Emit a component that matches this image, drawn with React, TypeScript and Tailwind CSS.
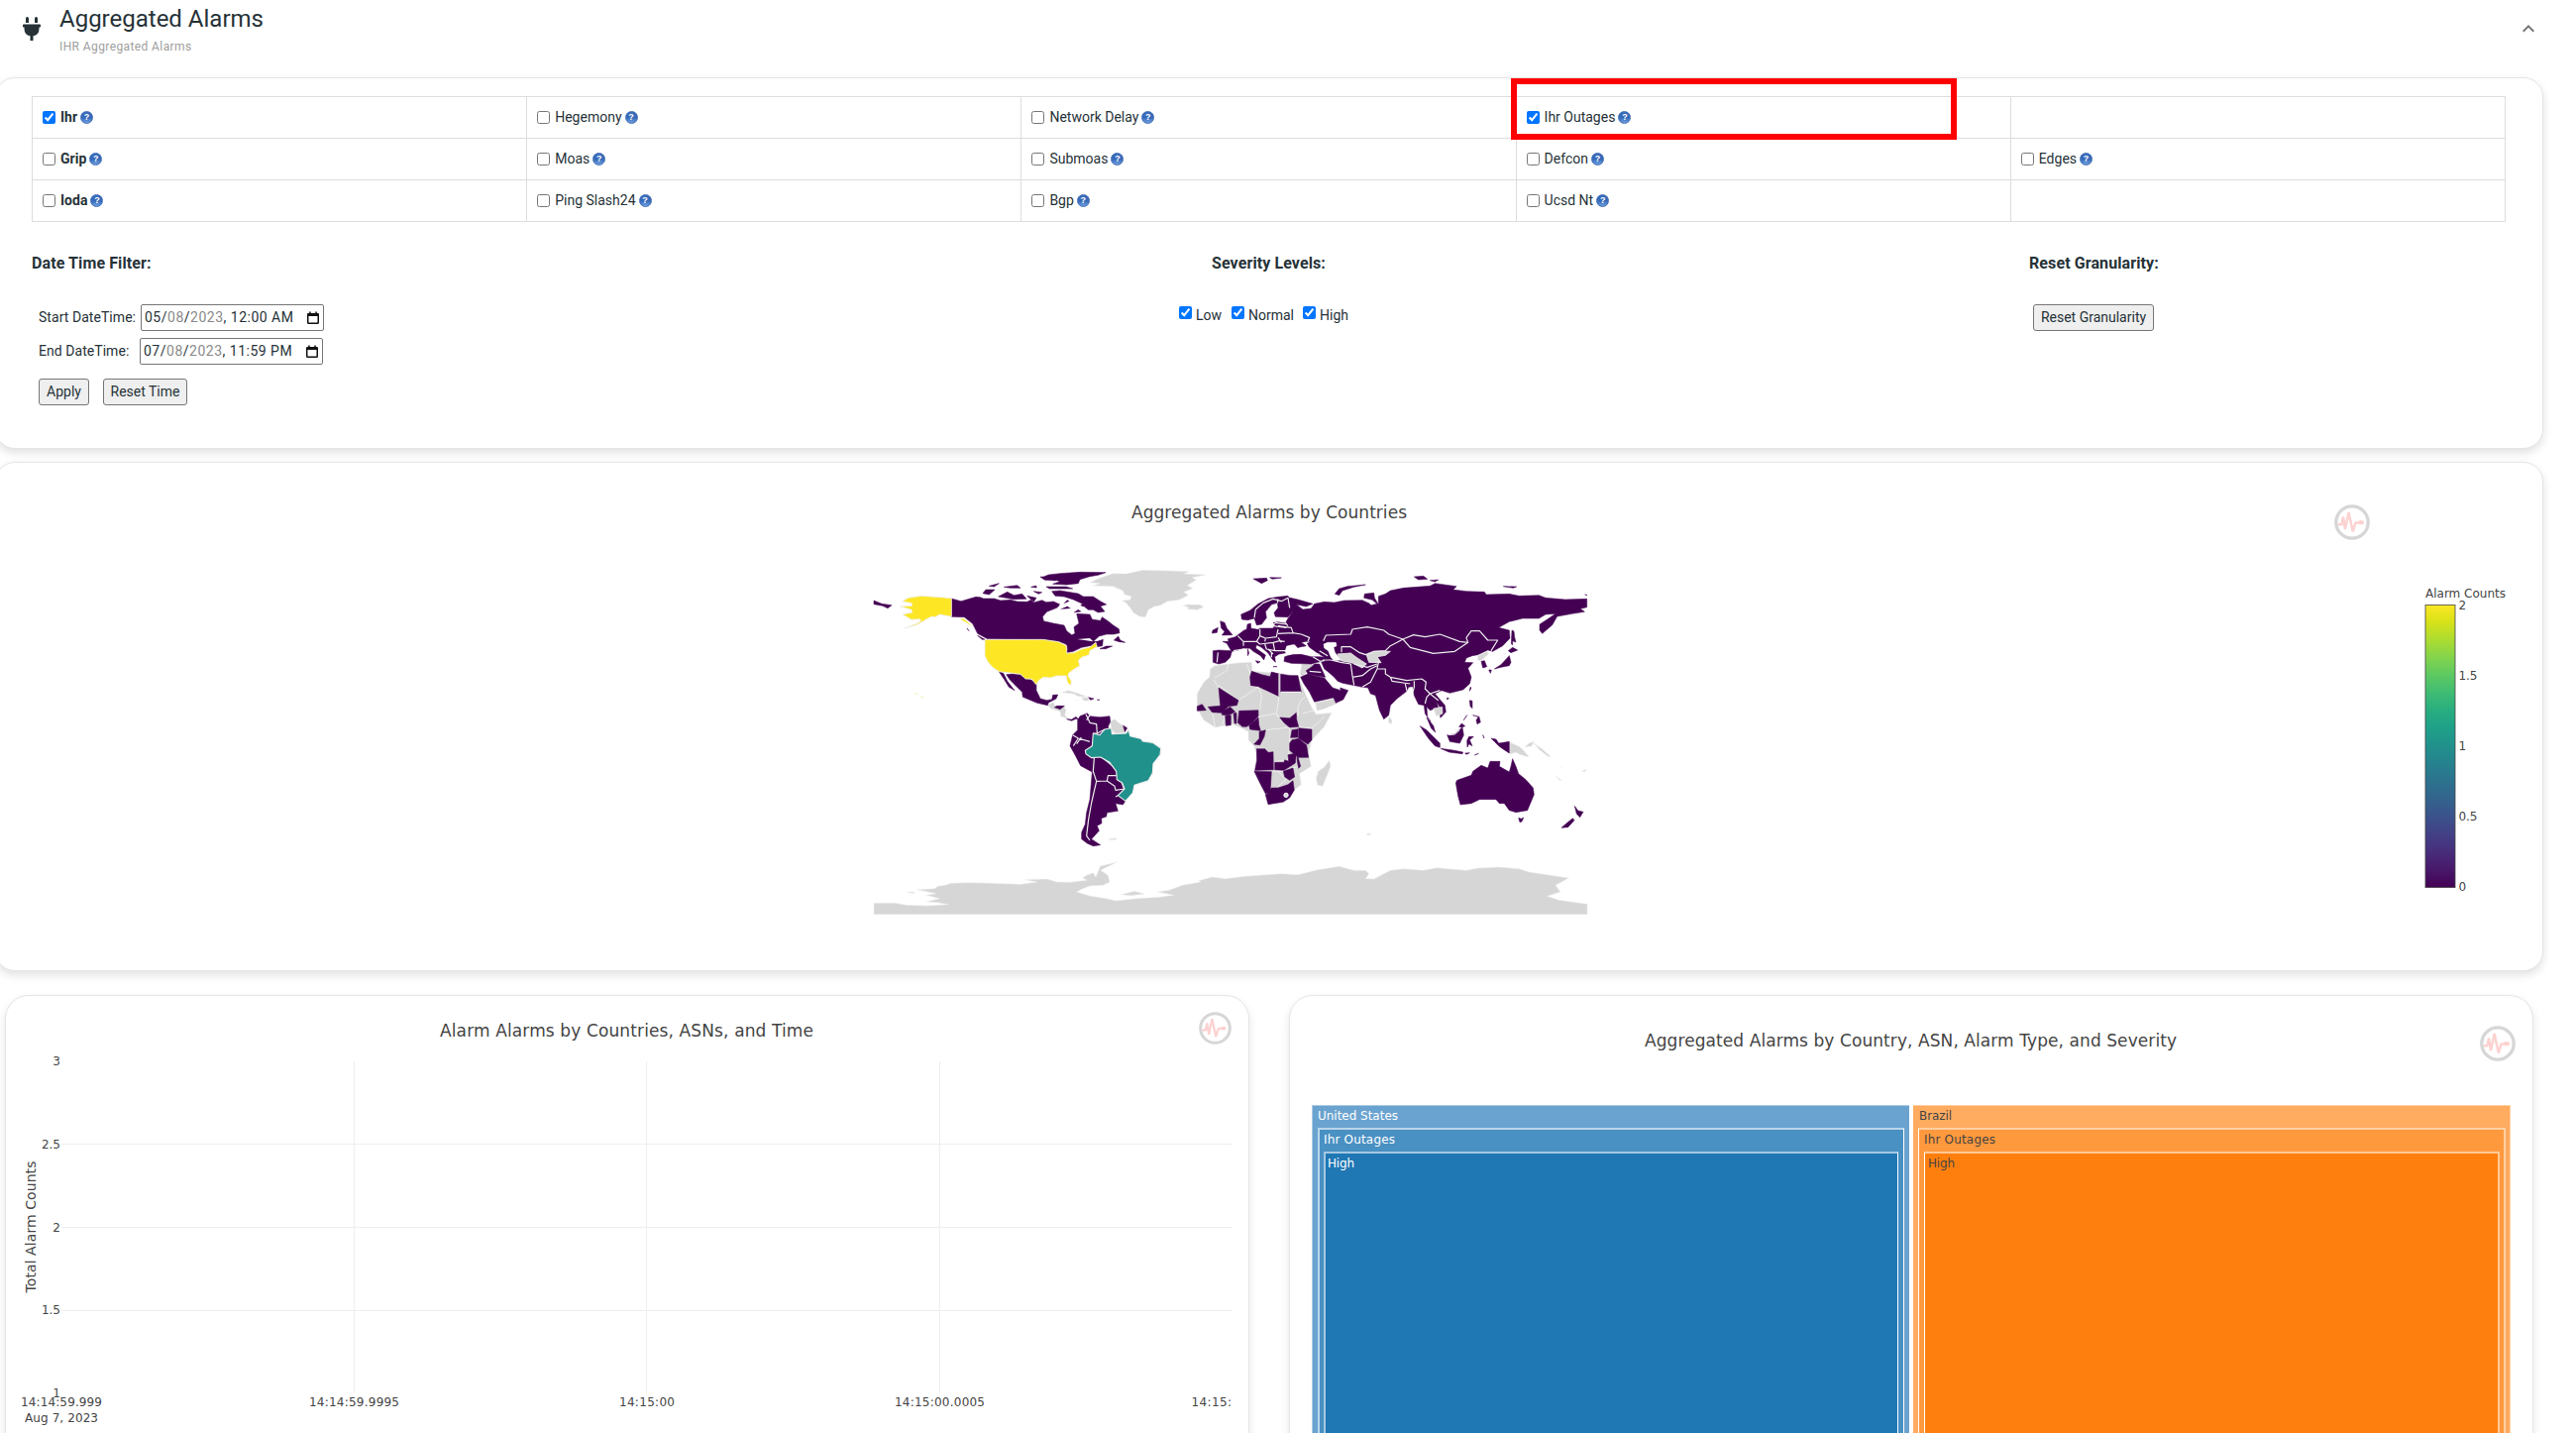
import React from "react";
import { FaPlug } from "react-icons/fa";
import { MdKeyboardArrowUp } from "react-icons/md";

const PURPLE = "#440154";
const LAND = "#d6d6d6";
const EDGE = "#eeeeee";

function Help() {
  return (
    <span className="ml-[3px] flex h-[13px] w-[13px] shrink-0 items-center justify-center rounded-full border border-[#3f6cb4] bg-gradient-to-b from-[#3a6dbd] via-[#3568b8] to-[#6fa0e0] font-['Liberation_Sans'] text-[9px] leading-none font-bold text-white">
      ?
    </span>
  );
}

type Alarm = { label: string; checked?: boolean; bold?: boolean } | null;

const rows: Alarm[][] = [
  [{ label: "Ihr", checked: true, bold: true }, { label: "Hegemony" }, { label: "Network Delay" }, { label: "Ihr Outages", checked: true }, null],
  [{ label: "Grip", bold: true }, { label: "Moas" }, { label: "Submoas" }, { label: "Defcon" }, { label: "Edges" }],
  [{ label: "Ioda", bold: true }, { label: "Ping Slash24" }, { label: "Bgp" }, { label: "Ucsd Nt" }, null],
];

function AlarmCell({ alarm }: { alarm: Alarm }) {
  return (
    <div className="flex h-[42px] items-center border-r border-b border-[#dddddd] pl-[10px] pb-px">
      {alarm && (
        <>
          <input type="checkbox" defaultChecked={alarm.checked} className="h-[13px] w-[13px]" />
          <span className={alarm.bold ? "ml-[5px] text-[14px] leading-5 font-bold" : "ml-[5px] text-[14px] leading-5"}>
            {alarm.label}
          </span>
          <Help />
        </>
      )}
    </div>
  );
}

function CalendarIcon() {
  return (
    <svg width="12" height="14" viewBox="0 0 12 14" fill="none">
      <rect x="0.75" y="2.75" width="10.5" height="9.5" rx="0.8" stroke="#111" strokeWidth="1.5" />
      <path d="M0.5 2h11v3h-11zM2.2 0.6h1.5v2H2.2zM8.3 0.6h1.5v2H8.3z" fill="#111" />
    </svg>
  );
}

function DateField({ month, rest }: { month: string; rest: string }) {
  return (
    <div className="flex h-[27px] w-[185px] items-center justify-between rounded-[2px] border border-[#767676] pr-[4px] pl-[3px] text-[14px]">
      <span className="tracking-[0.5px] whitespace-pre">
        {month}/<span className="text-[#8a8a8a]">08</span>/<span className="text-[#8a8a8a]">2023</span>, {rest}
      </span>
      <CalendarIcon />
    </div>
  );
}

function PlainButton({ children, className }: { children: React.ReactNode; className: string }) {
  return (
    <button className={`flex h-[27px] items-center justify-center rounded-[3px] border border-[#767676] bg-[#efefef] text-[14px] whitespace-nowrap ${className}`}>
      {children}
    </button>
  );
}

function PulseLogo({ size }: { size: number }) {
  return (
    <svg width={size} height={size} viewBox="0 0 36 36" fill="none">
      <circle cx="18" cy="18" r="16.2" stroke="#d6d6d6" strokeWidth="3.3" />
      <path d="M3.8 20.2H7.5L9 12.5L11 25L14.6 8L18.8 27.5L21.5 18.4H27" stroke="#fcd2d0" strokeWidth="2.5" strokeLinejoin="bevel" />
      <ellipse cx="27" cy="18.2" rx="2.9" ry="2.1" fill="#fcd2d0" />
    </svg>
  );
}

// Outlines are drawn at three units per pixel; the eastern half has its own origin.
const westGray = [
  "M690,83L720,70 760,56 800,57 850,46 930,48 990,50 975,57 1040,60 1000,68 1012,76 985,92 1002,101 975,112 988,122 960,136 925,140 905,152 885,156 868,165 858,188 840,186 822,175 812,160 800,145 788,138 812,136 815,125 795,120 790,108 760,95 700,93 720,86Z",
  "M972,154L985,150 1025,151 1034,158 1015,166 985,164 990,158Z",
  "M36,1054L100,1054 135,1060 200,1062 260,1058 230,1052 196,1050 235,1040 195,1030 225,1025 167,1013 220,1010 230,1003 250,1000 270,994 320,992 400,994 480,997 530,990 495,983 560,981 590,990 630,991 682,985 668,978 680,970 700,962 708,975 722,942 772,930 735,948 723,955 745,970 750,990 730,1000 690,1002 665,1012 650,1020 690,1032 740,1040 770,1047 830,1040 900,1036 944,1030 895,1020 930,1015 970,1000 1025,990 1020,986 1060,975 1100,980 1160,973 1270,965 1320,968 1380,953 1445,943 1490,955 1525,955 1535,965 1525,980 1550,981 1600,955 1640,950 1700,955 1740,947 1830,955 1865,948 1925,945 1990,950 2020,960 2140,978 2100,1000 2115,1020 2075,1033 2110,1045 2196,1057 2196,1088 36,1088Z",
  "M135,1020l20,0 5,5Z", "M785,1028l40,-10 30,8 -40,5Z",
  "M562,455L580,445 585,460 612,458 618,470 614,484 625,496 602,488 600,474 572,465Z",
  "M605,416L625,410 650,418 684,430 655,428 640,420Z", "M645,440l15,0M664,432l20,0 4,8 -14,2Z",
  "M752,503L765,497 780,510 800,520 798,538 768,541 755,530Z", "M748,860l20,-3 4,4 -22,2Z",
];

const westPurple = [
  "M271,132L300,140 345,127 358,128 368,132 400,132 420,138 450,136 470,141 500,142 512,136 520,144 545,137 558,143 580,141 600,150 590,160 560,172 547,187 550,200 580,207 612,213 620,230 635,242 645,238 642,218 657,207 650,178 690,180 697,195 722,199 727,188 745,200 760,212 778,224 780,236 762,240 740,240 718,246 700,262 712,262 730,256 728,275 712,278 690,275 665,280 640,292 618,297 622,285 618,270 595,262 545,256 380,254 350,238 335,208 310,188 271,187Z",
  "M545,68L565,60 600,56 660,52 738,53 715,61 690,65 660,74 655,86 620,90 578,88 600,80 580,74 555,76Z",
  "M575,110L600,108 655,117 670,126 700,126 722,140 740,150 722,155 735,171 715,174 700,166 685,166 672,155 650,162 668,148 640,135 612,126 585,124Z",
  "M413,126L440,112 460,122 485,118 498,133 460,134Z", "M366,116L375,105 402,105 385,120Z",
  "M385,94L415,86 400,96Z", "M430,97L470,92 480,100 450,100Z", "M512,97l15,-4 2,6Z", "M520,110l25,3 -10,5Z",
  "M558,96l60,0 20,6 -70,0Z", "M540,66l50,4 -4,8 -35,-4Z", "M602,160l20,-5 10,6 -20,4Z", "M500,124l28,6 -8,12Z",
  "M763,258L776,246 782,258 797,265 780,263Z", "M720,284l20,-8 18,0 -20,8Z", "M350,244l22,12 -8,0Z", "M318,222l6,8Z",
  "M36,138L60,148 90,152 78,161 62,154 36,149Z",
  "M437,362L455,360 480,362 495,375 505,373 528,390 528,410 540,435 560,440 575,437 578,424 593,423 588,435 565,447 562,455 530,448 487,430 485,415 465,395 448,378Z",
  "M415,353L428,358 440,382 462,410 445,400 430,376Z",
  "M583,461L590,457 613,457 600,467Z", "M620,497L635,498 648,490 656,498 648,496 635,502Z", "M686,431l16,4 -10,4Z", "M712,438l8,1Z",
  "M653,500L660,488 682,479 690,488 720,491 750,488 752,505 745,520 757,540 700,600 722,612 770,650 790,705 798,744 790,756 768,752 775,775 742,780 740,792 725,797 726,812 712,820 718,835 695,860 722,878 700,881 682,873 665,860 665,840 676,815 680,780 690,740 697,657 662,638 645,605 630,578 638,545 653,530Z",
  "M791,517L803,524 796,535Z",
];

const eastGray = [
  "M95,345L108,335 150,330 185,326 220,325 222,352 305,358 360,365 372,395 385,425 402,462 415,482 462,478 440,520 402,560 392,600 400,640 365,662 370,695 345,715 320,745 270,755 258,720 228,655 235,605 228,580 210,560 210,535 180,520 160,512 110,522 75,500 55,465 55,420 75,385 92,370Z",
  "M455,622L459,640 448,668 435,700 420,697 415,675 422,655 440,642Z",
  "M372,330L405,328 402,345 388,352 375,368 366,362Z", "M413,448L470,435 478,450 440,466 418,472Z",
  "M635,488l10,12 -2,12 -8,-4Z",
  "M1002,567L1030,580 1042,590 1060,612 1035,605 1020,598 1002,602Z", "M1060,570l15,-5 -8,14 -20,2Z", "M1075,570l25,18 25,22 -8,0 -25,-20Z",
  "M1140,670l18,12 -6,0Z", "M1220,655l14,-6 -6,8Z", "M568,845l10,-3 2,4 -8,3Z", "M1155,640l6,6Z",
];

const eastPurple = [
  "M103,290L120,288 158,290 145,268 132,262 150,262 148,254 170,248 188,235 197,228 205,225 207,210 217,207 218,222 240,226 245,222 285,222 292,208 285,205 300,203 322,207 330,192 345,172 338,150 330,128 360,135 405,148 385,156 355,150 375,165 400,162 410,148 440,142 470,144 500,138 555,137 575,146 582,152 600,148 585,136 560,130 562,118 590,115 592,130 604,150 604,125 625,118 640,108 680,100 760,94 775,86 840,95 830,105 870,110 925,112 930,120 1000,118 1030,124 1090,122 1110,130 1170,135 1235,133 1235,158 1215,163 1228,172 1190,178 1145,186 1130,212 1100,238 1092,228 1092,210 1115,195 1140,178 1110,180 1090,192 1040,192 1000,202 968,220 1000,228 1002,252 980,275 950,292 935,288 905,302 888,305 870,312 865,325 890,326 875,343 885,370 880,390 860,408 820,418 795,410 775,420 805,455 808,475 792,493 790,485 798,475 780,445 785,462 760,470 750,460 752,490 762,505 745,480 742,455 725,452 712,425 708,398 695,400 690,412 660,435 640,455 635,485 620,497 607,470 595,425 580,420 572,402 555,400 525,394 495,388 480,382 470,370 447,350 440,345 430,322 420,325 400,330 340,328 318,322 320,308 345,300 370,300 400,308 425,308 440,310 415,294 395,280 388,268 400,262 385,262 370,265 385,275 360,282 350,270 330,275 322,290 325,296 303,300 290,308 292,325 282,315 270,297 250,280 235,272 232,282 262,303 257,318 247,305 225,292 215,283 195,282 180,288 160,292 155,310 140,325 120,330 103,325Z",
  "M188,180L215,168 240,148 270,132 300,127 330,124 340,150 345,172 330,188 292,187 288,175 300,160 298,145 280,150 262,172 265,190 250,210 235,212 228,192 208,197 190,195Z",
  "M125,200L138,205 145,222 162,242 130,243 138,232 128,222Z", "M102,228L118,220 115,235 100,237Z",
  "M225,72L265,70 268,77 250,86Z", "M275,68l35,1 -28,4Z",
  "M472,118L485,102 510,95 565,90 530,97 495,108 485,122Z", "M712,66L740,64 752,73 725,75Z", "M760,77l25,-2 -10,6Z", "M982,95l40,1 -10,4Z", "M1229,120l7,2Z",
  "M208,285l4,12 -4,8Z M232,320l14,3 -8,5Z M285,338l12,0Z",
  "M385,350L400,340 410,330 425,330 443,370 420,367 390,360Z", "M368,370L390,360 420,368 440,372 465,402 490,410 488,402 512,410 497,438 475,448 468,432 410,445 395,415 378,390Z",
  "M303,360L280,354 276,368 250,362 220,352 215,370 217,395 240,398 260,408 303,428Z", "M308,361L335,365 360,365 370,415 308,415Z",
  "M120,402L180,440 175,455 150,458 130,478 100,476 88,460 125,457Z", "M130,475L155,460 170,475 150,485 130,484Z", "M55,458L70,452 82,470 55,472Z",
  "M140,487L157,485 157,515 142,517Z", "M165,480L174,478 174,510 168,510Z", "M182,472L240,470 240,488 225,505 205,520 192,520 178,508Z", "M240,492L242,515 247,532 215,528 212,515 230,502Z",
  "M243,535L262,530 258,550 245,575 227,573 243,556Z", "M305,492L335,494 355,478 356,498 362,520 335,522 318,508Z", "M342,530L360,527 360,552 338,553Z",
  "M362,524L402,528 402,560 390,573 362,555Z", "M342,560L362,556 386,575 392,613 362,613 335,592 335,570Z", "M235,587L260,587 270,598 285,596 286,650 230,652 236,622Z",
  "M290,628L318,628 320,620 332,625 330,605 355,600 352,630 318,652 290,650Z", "M357,600L368,640 362,646 358,625Z", "M316,655L345,645 350,672 335,682 320,672Z",
  "M228,655L280,656 278,690 276,720 262,722 245,690Z", "M270,722L280,705 300,705 330,695 345,683 349,712 335,735 315,748 270,755 262,725Z",
  "M838,690L842,682 885,667 890,655 915,637 935,645 942,625 972,625 970,640 1000,657 1005,640 1010,617 1020,640 1028,662 1050,680 1072,705 1075,725 1055,773 1020,779 1000,773 985,752 970,752 960,740 910,740 885,752 852,756 845,730Z",
  "M1028,796l8,3 7,-4 -5,12 -6,2Z", "M1198,760l10,14 16,4 -10,16 -10,-10Z", "M1192,797L1197,803 1178,824 1158,826 1170,815Z",
  "M730,518L750,530 790,570 790,583 775,578 755,555Z", "M792,586l38,5 30,6 -2,5 -40,-5Z", "M866,600l14,-1 -10,5Z", "M895,606l12,-5Z", "M812,545L835,543 848,530 858,522 862,545 850,570 820,565Z",
  "M872,562L878,550 892,550 880,560 888,578 878,572 873,582Z", "M945,555L960,558 968,570 1000,565 1000,600 985,590 970,580 955,565Z",
  "M848,520l8,-10 10,8 -10,4Z", "M750,492l20,25 6,20 -12,-12Z", "M880,440l8,2 0,22 -6,-6Z M900,500l8,-12 5,18 -10,6Z M890,485l16,5Z M880,412l2,-12 3,2Z M862,500l10,-15Z M920,545l4,10Z",
  "M812,432l5,2 -5,4Z", "M915,322L925,320 932,338 920,342Z", "M1000,305L1005,325 1000,335 975,340 955,345 975,332Z", "M997,290L1010,280 1025,288 1005,296Z M938,348l8,0 -3,10Z", "M1008,228l6,3 2,18 4,15 -10,-4 0,12 -4,-3Z",
];

const seas = [
  "M321,293L326,276 345,272 360,283 372,279 393,281 413,296 420,304 395,303 370,299 345,300 330,302Z",
  "M438,270L450,265 475,265 477,275 468,280 472,295 490,318 470,320 460,310 452,290 440,282Z",
];

const westLines =
  "M678,482L690,508 710,512 712,540M638,545L655,555 690,565M655,555L640,578M700,540L712,540 735,528M703,615L700,655 710,685 742,684 745,668 770,668M710,685L703,715 695,750 686,800 680,850 690,864M742,684L765,700 768,712 795,708M768,732L775,728M690,485L680,500M664,552L650,572";
const eastLines =
  "M228,190L232,165 255,145 285,133 310,140M310,140L330,130 335,160M298,145L300,133M437,260L445,243 520,240 525,225 570,218 620,228 635,240 678,255 660,265 640,275 625,290 590,292 565,302 545,295 520,278 492,278 492,295M678,255L710,242 745,248 790,240 850,262 875,265 870,250 885,230 910,230 935,258 965,258 945,290M678,255L700,280 770,298 835,292 875,265M425,322L440,320M435,318L460,318 490,325 520,330 525,365 530,394M525,370L555,365 580,345 600,335M530,330L570,340 600,330M555,400L580,385 600,345 625,345 625,360 640,370 690,380 735,375M640,370L645,382 700,390M685,390L690,412M712,382L712,400 708,415M735,375L748,385 745,405 760,420 750,430 745,450M760,420L785,440M760,420L790,410M600,345L605,320M165,290L195,285M178,245L195,262 195,275M245,224L245,245 262,252 295,248 300,225M195,262L235,262 245,245M300,238L345,236 370,240 395,250 390,262M300,215L340,220 345,235M322,205L330,215M285,215L325,220M235,262L245,270 285,265 305,260 320,262M260,270L265,285 290,290 325,290M262,252L260,262M405,303L425,300M405,308L425,320M290,205L325,210M285,265L290,290M118,295L115,325M270,285L285,300M425,290L450,305M395,352L430,355M300,250L310,265M280,295L280,310M303,360L303,428M308,415L370,415";
const africaLines =
  "M105,378L120,402 125,455M120,395L180,440M150,330L145,350 108,372M205,330L218,365 215,395 240,400M180,440L240,400 250,425 245,470M303,428L260,410M303,415L300,450 295,480 305,492M240,490L290,480 320,510M360,460L370,440 380,430M360,460L362,485 355,480M362,520L402,525 440,490M262,530L335,522M335,522L335,575 330,620 290,625M280,656L318,655M345,645L362,640M300,656L325,680 300,700M100,476L110,520M140,487L130,515M410,470L375,480";

function MapShapes({ paths, fill, stroke }: { paths: string[]; fill: string; stroke: string }) {
  return (
    <g fill={fill} stroke={stroke} strokeWidth="1.6" strokeLinejoin="round">
      {paths.map((d, i) => (
        <path key={i} d={d} />
      ))}
    </g>
  );
}

function WorldMap() {
  return (
    <svg width="733" height="370" viewBox="0 0 2199 1110" className="block">
      <MapShapes paths={westGray} fill={LAND} stroke={EDGE} />
      <MapShapes paths={westPurple} fill={PURPLE} stroke={PURPLE} />
      <path d="M598,150L640,140 675,160 650,178 600,168Z M652,255L700,262 690,252Z" fill="#fff" />
      <path d="M640,175L655,165 665,172Z M600,164L622,155 632,162Z M610,148l12,-12 6,4Z" fill={PURPLE} />
      <g fill="#fde725" stroke={EDGE} strokeWidth="2.5" strokeLinejoin="round">
        <path d="M271,131L240,128 180,124 140,130 122,140 150,146 152,154 116,156 150,166 152,174 123,180 140,190 150,196 175,194 178,200 165,208 128,222 165,212 200,192 212,186 222,188 235,180 271,187Z" />
        <path d="M372,256L548,256 595,263 620,275 620,297 642,296 665,285 690,279 708,265 712,278 690,290 688,302 665,310 655,320 660,335 640,347 626,358 624,366 634,382 632,396 622,385 618,366 590,366 570,372 550,370 535,380 527,392 515,376 495,375 480,361 415,353 395,340 380,322 372,305Z" />
        <path d="M295,192L310,194 335,217 318,206Z" strokeWidth="0.5" />
      </g>
      <path d="M160,418l10,4M178,430l8,2" stroke="#f3ecaa" strokeWidth="3" />
      <path
        d="M700,540L720,545 735,528 755,524 757,542 800,540 807,528 812,548 845,556 850,564 880,568 905,585 903,605 882,632 880,660 867,683 825,697 820,720 798,745 775,728 795,708 788,690 772,680 770,655 750,628 722,612 695,614 678,602 676,592 697,578Z"
        fill="#21918c"
        stroke={EDGE}
        strokeWidth="3.4"
        strokeLinejoin="round"
      />
      <path d={westLines} fill="none" stroke={EDGE} strokeWidth="3.6" strokeLinejoin="round" />
      <g transform="translate(960 0)">
        <MapShapes paths={eastGray} fill={LAND} stroke={EDGE} />
        <path d={africaLines} fill="none" stroke={EDGE} strokeWidth="3" />
        <MapShapes paths={eastPurple} fill={PURPLE} stroke={PURPLE} />
        <MapShapes paths={seas} fill="#fff" stroke="#fff" />
        <path d="M480,300L520,297 540,312 568,330 555,342 525,327 490,320Z M568,303L592,292 640,292 625,304 600,308 612,326 575,325Z" fill={LAND} stroke={EDGE} strokeWidth="2.5" />
        <path d="M770,465L797,460 798,480 780,488Z M905,305L935,292 937,300 917,318 905,320Z" fill={LAND} stroke={EDGE} strokeWidth="2" />
        <path d={eastLines} fill="none" stroke={EDGE} strokeWidth="3.6" strokeLinejoin="round" />
        <circle cx="324" cy="727" r="6.5" fill={LAND} stroke="#fff" strokeWidth="3" />
        <path d="M815,545L835,543 850,530" fill="none" stroke={EDGE} strokeWidth="3" />
      </g>
    </svg>
  );
}

const colorTicks: [string, number, number][] = [
  ["2", 25, 7],
  ["1.5", 96, 19],
  ["1", 167, 7],
  ["0.5", 238, 19],
  ["0", 309, 7],
];

function ColorBar() {
  return (
    <svg width="90" height="330" className="block font-['DejaVu_Sans']" fill="#444">
      <defs>
        <linearGradient id="viridis" x1="0" y1="1" x2="0" y2="0">
          <stop offset="0" stopColor="#440154" />
          <stop offset="0.0627" stopColor="#48186a" />
          <stop offset="0.1255" stopColor="#472d7b" />
          <stop offset="0.1882" stopColor="#424086" />
          <stop offset="0.251" stopColor="#3b528b" />
          <stop offset="0.3137" stopColor="#33638d" />
          <stop offset="0.3765" stopColor="#2c728e" />
          <stop offset="0.4392" stopColor="#26828e" />
          <stop offset="0.502" stopColor="#21918c" />
          <stop offset="0.5647" stopColor="#1fa088" />
          <stop offset="0.6275" stopColor="#28ae80" />
          <stop offset="0.6902" stopColor="#3fbc73" />
          <stop offset="0.7529" stopColor="#5ec962" />
          <stop offset="0.8157" stopColor="#84d44b" />
          <stop offset="0.8784" stopColor="#addc30" />
          <stop offset="0.9412" stopColor="#d8e219" />
          <stop offset="1" stopColor="#fde725" />
        </linearGradient>
      </defs>
      <text x="1" y="13" fontSize="12" textLength="81">Alarm Counts</text>
      <rect x="1" y="20.5" width="30" height="285" fill="url(#viridis)" stroke="#444" strokeOpacity="0.8" />
      {colorTicks.map(([t, y, w]) => (
        <text key={t} x="34.5" y={y} fontSize="12" textLength={w}>{t}</text>
      ))}
    </svg>
  );
}

function TimeChart() {
  return (
    <svg width="1254" height="440" className="block font-['DejaVu_Sans']" fill="#444">
      <text x="438" y="41" fontSize="17" textLength="377">Alarm Alarms by Countries, ASNs, and Time</text>
      <g stroke="#eeeeee" strokeWidth="1">
        <path d="M56,149.5H1238M56,233.5H1238M56,317.5H1238M351.5,66V401M646.5,66V401M942.5,66V401" />
      </g>
      <g fontSize="12" textAnchor="end">
        <text x="55" y="70">3</text>
        <text x="55" y="154" textLength="19">2.5</text>
        <text x="55" y="238">2</text>
        <text x="55" y="321" textLength="19">1.5</text>
        <text x="55" y="405">1</text>
      </g>
      <g fontSize="12">
        <text x="15" y="414" textLength="82">14:14:59.999</text>
        <text x="19" y="430" textLength="74">Aug 7, 2023</text>
        <text x="306" y="414" textLength="91">14:14:59.9995</text>
        <text x="619" y="414" textLength="56">14:15:00</text>
        <text x="897" y="414" textLength="91">14:15:00.0005</text>
        <text x="1196.5" y="414" textLength="40.5">14:15:</text>
      </g>
      <text transform="translate(30 299.5) rotate(-90)" fontSize="14" textLength="133">Total Alarm Counts</text>
    </svg>
  );
}

function ChartTitle({ children, width }: { children: string; width: number }) {
  return (
    <svg width={width} height="24" className="block overflow-visible font-['DejaVu_Sans']">
      <text x="0" y="17" fontSize="17" fill="#444" textLength={width}>{children}</text>
    </svg>
  );
}

function TreeLabel({ children, width, fill }: { children: string; width: number; fill: string }) {
  return (
    <svg width={width} height="20" className="block overflow-visible font-['DejaVu_Sans']">
      <text x="0" y="14" fontSize="12" fill={fill} textLength={width}>{children}</text>
    </svg>
  );
}

export default function App() {
  return (
    <div className="relative flex h-[1446px] w-[2600px] flex-col overflow-hidden bg-white font-['Roboto',sans-serif] text-[#263238]">
      <header className="flex h-[78px] shrink-0 items-start">
        <FaPlug className="mt-[17px] ml-[23px] h-[24px] w-[18px]" />
        <div className="mt-[3px] ml-[19px] flex flex-col">
          <h1 className="text-[24px] leading-[32px]">Aggregated Alarms</h1>
          <p className="text-[12px] leading-[24px] tracking-[0.4px] text-[#9e9e9e]">IHR Aggregated Alarms</p>
        </div>
        <MdKeyboardArrowUp className="mt-[17px] mr-[36px] ml-auto h-6 w-6 text-[#757575]" />
      </header>

      <section className="-ml-[5px] h-[375px] w-[2572px] shrink-0 rounded-[20px] border border-[#e5e5e5] bg-white pt-[18px] pl-[36px] shadow-[0_4px_10px_rgba(0,0,0,0.12)]">
        <div className="grid w-[2497px] grid-cols-5 border-t border-l border-[#dddddd]">
          {rows.flat().map((alarm, i) => (
            <AlarmCell key={i} alarm={alarm} />
          ))}
        </div>

        <div className="flex items-start">
          <div className="w-[1122px]">
            <h2 className="mt-[30px] text-[16px] leading-6 font-bold tracking-[0.1px]">Date Time Filter:</h2>
            <div className="mt-[29px] ml-[7px] flex h-[27px] items-center">
              <span className="w-[103px] text-[14px] tracking-[0.05px]">Start DateTime:</span>
              <DateField month="05" rest="12:00 AM" />
            </div>
            <div className="mt-[7px] ml-[7px] flex h-[27px] items-center">
              <span className="w-[102px] text-[14px] tracking-[0.05px]">End DateTime:</span>
              <DateField month="07" rest="11:59 PM" />
            </div>
            <div className="mt-[14px] ml-[7px] flex gap-[14px]">
              <PlainButton className="w-[51px]">Apply</PlainButton>
              <PlainButton className="w-[85px]">Reset Time</PlainButton>
            </div>
          </div>

          <div className="w-[894px] pl-[36px]">
            <h2 className="mt-[30px] ml-[33px] text-[16px] leading-6 font-bold tracking-[0.1px]">Severity Levels:</h2>
            <div className="mt-[29px] flex text-[14px] leading-[22px]">
              <label className="flex w-[53px]"><input type="checkbox" defaultChecked className="mt-[2px] mr-[4px] h-[13px] w-[13px]" />Low</label>
              <label className="flex w-[72px]"><input type="checkbox" defaultChecked className="mt-[2px] mr-[4px] h-[13px] w-[13px]" />Normal</label>
              <label className="flex"><input type="checkbox" defaultChecked className="mt-[2px] mr-[4px] h-[13px] w-[13px]" />High</label>
            </div>
          </div>

          <div>
            <h2 className="mt-[30px] text-[16px] leading-6 font-bold tracking-[0.1px]">Reset Granularity:</h2>
            <PlainButton className="mt-[29px] ml-[4px] w-[122px]">Reset Granularity</PlainButton>
          </div>
        </div>
      </section>

      <section className="relative mt-[13px] -ml-[5px] h-[514px] w-[2572px] shrink-0 rounded-[20px] border border-[#e5e5e5] bg-white shadow-[0_4px_10px_rgba(0,0,0,0.12)]">
        <div className="mt-[39px] ml-[1146px]">
          <ChartTitle width={278}>Aggregated Alarms by Countries</ChartTitle>
        </div>
        <div className="mt-[30px] flex">
          <div className="ml-[874px] w-[1577px]">
            <WorldMap />
          </div>
          <div className="mt-[30px]">
            <ColorBar />
          </div>
        </div>
        <div className="absolute top-[42px] left-[2360px]">
          <PulseLogo size={36} />
        </div>
      </section>

      <div className="mt-[24px] flex">
        <section className="relative ml-[5px] h-[600px] w-[1256px] shrink-0 rounded-[24px] border border-[#e5e5e5] bg-white shadow-[0_4px_10px_rgba(0,0,0,0.1)]">
          <TimeChart />
          <div className="absolute top-[16px] left-[1204px]">
            <PulseLogo size={33} />
          </div>
        </section>

        <section className="relative ml-[40px] h-[600px] w-[1256px] shrink-0 rounded-[24px] border border-[#e5e5e5] bg-white shadow-[0_4px_10px_rgba(0,0,0,0.1)]">
          <div className="mt-[34px] ml-[358px]">
            <ChartTitle width={537}>Aggregated Alarms by Country, ASN, Alarm Type, and Severity</ChartTitle>
          </div>
          <div className="mt-[52px] ml-[22px] flex h-[500px] gap-[4px]">
            <div className="flex w-[603px] flex-col border-t border-l border-[#a9cbe5] bg-[#6ba3d0] px-[5px]">
              <div className="h-[22px]"><TreeLabel width={81} fill="#fff">United States</TreeLabel></div>
              <div className="flex flex-1 flex-col border-t-2 border-r border-l-2 border-[#b9d5ea] border-r-white bg-[#4990c3] pr-[5px] pl-[4px]">
                <div className="h-[22px]"><TreeLabel width={72} fill="#fff">Ihr Outages</TreeLabel></div>
                <div className="flex-1 border-t-2 border-r border-l-2 border-[#a5c8e1] border-r-white bg-[#1f77b4] pl-[2px]">
                  <TreeLabel width={27} fill="#fff">High</TreeLabel>
                </div>
              </div>
            </div>
            <div className="flex w-[603px] flex-col border-t border-r border-[#ffd0a4] bg-[#ffab60] pr-[4px] pl-[5px]">
              <div className="ml-px h-[22px]"><TreeLabel width={33} fill="#444">Brazil</TreeLabel></div>
              <div className="flex flex-1 flex-col border-t-2 border-r-2 border-l border-[#ffd0a4] border-l-white bg-[#ff993e] pr-[4px] pl-[5px]">
                <div className="h-[22px]"><TreeLabel width={72} fill="#444">Ihr Outages</TreeLabel></div>
                <div className="flex-1 border-t-2 border-r-2 border-l border-[#ffc994] border-l-white bg-[#ff7f0e] pl-[3px]">
                  <TreeLabel width={27} fill="#444">High</TreeLabel>
                </div>
              </div>
            </div>
          </div>
          <div className="absolute top-[30px] left-[1201px]">
            <PulseLogo size={36} />
          </div>
        </section>
      </div>

      <div className="absolute top-[79px] left-[1525px] h-[62px] w-[450px] border-[6px] border-[#ff0000]" />
    </div>
  );
}
